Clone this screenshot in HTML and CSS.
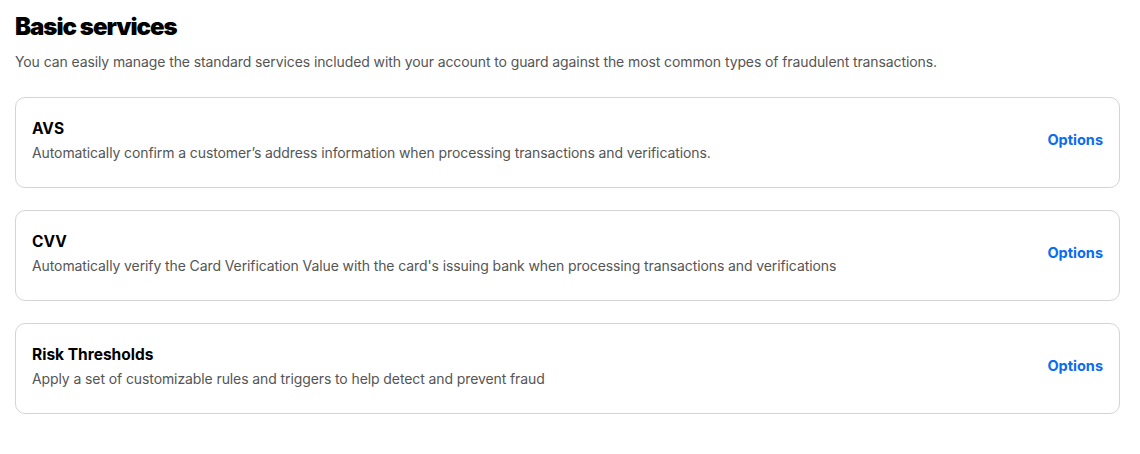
FILE: index.html
```html
<!DOCTYPE html>
<html>
<head>
<meta charset="utf-8">
<link rel="stylesheet" href="styles.css">
</head>
<body>
<main class="page">
  <h1 class="title">Basic services</h1>
  <p class="intro">You can easily manage the standard services included with your account to guard against the most common types of fraudulent transactions.</p>
  <div class="cards">
    <section class="card">
      <div class="card-text">
        <h2 class="card-title">AVS</h2>
        <p class="card-desc">Automatically confirm a customer’s address information when processing transactions and verifications.</p>
      </div>
      <a class="options" href="#">Options</a>
    </section>
    <section class="card">
      <div class="card-text">
        <h2 class="card-title">CVV</h2>
        <p class="card-desc">Automatically verify the Card Verification Value with the card's issuing bank when processing transactions and verifications</p>
      </div>
      <a class="options" href="#">Options</a>
    </section>
    <section class="card">
      <div class="card-text">
        <h2 class="card-title">Risk Thresholds</h2>
        <p class="card-desc">Apply a set of customizable rules and triggers to help detect and prevent fraud</p>
      </div>
      <a class="options" href="#">Options</a>
    </section>
  </div>
</main>
</body>
</html>
```
FILE: styles.css
```css
* { box-sizing: border-box; }
html, body { margin: 0; background: #fff; }
body { font-family: Inter, "Noto Sans", sans-serif; color: #000; }
.page { padding: 10px 20px 0 15px; }
.title {
  margin: 0;
  font-size: 24px;
  line-height: 34px;
  font-weight: 900;
  letter-spacing: -1px;
}
.intro {
  margin: 8px 0 0;
  font-size: 14px;
  line-height: 20px;
  letter-spacing: -0.1px;
  color: #555;
}
.cards {
  margin-top: 25px;
  display: flex;
  flex-direction: column;
  gap: 22px;
}
.card {
  display: flex;
  align-items: flex-start;
  justify-content: space-between;
  height: 91px;
  padding: 20px 16px 0 16px;
  border: 1px solid #d4d4d4;
  border-radius: 10px;
}
.card-title {
  margin: 0;
  font-size: 15.5px;
  line-height: 22px;
  font-weight: 700;
}
.card-desc {
  margin: 3px 0 0;
  font-size: 14px;
  line-height: 20px;
  letter-spacing: -0.1px;
  color: #555;
}
.options {
  margin-top: 12px;
  color: #0a6cf0;
  font-weight: 700;
  font-size: 14.5px;
  line-height: 20px;
  text-decoration: none;
}
```
